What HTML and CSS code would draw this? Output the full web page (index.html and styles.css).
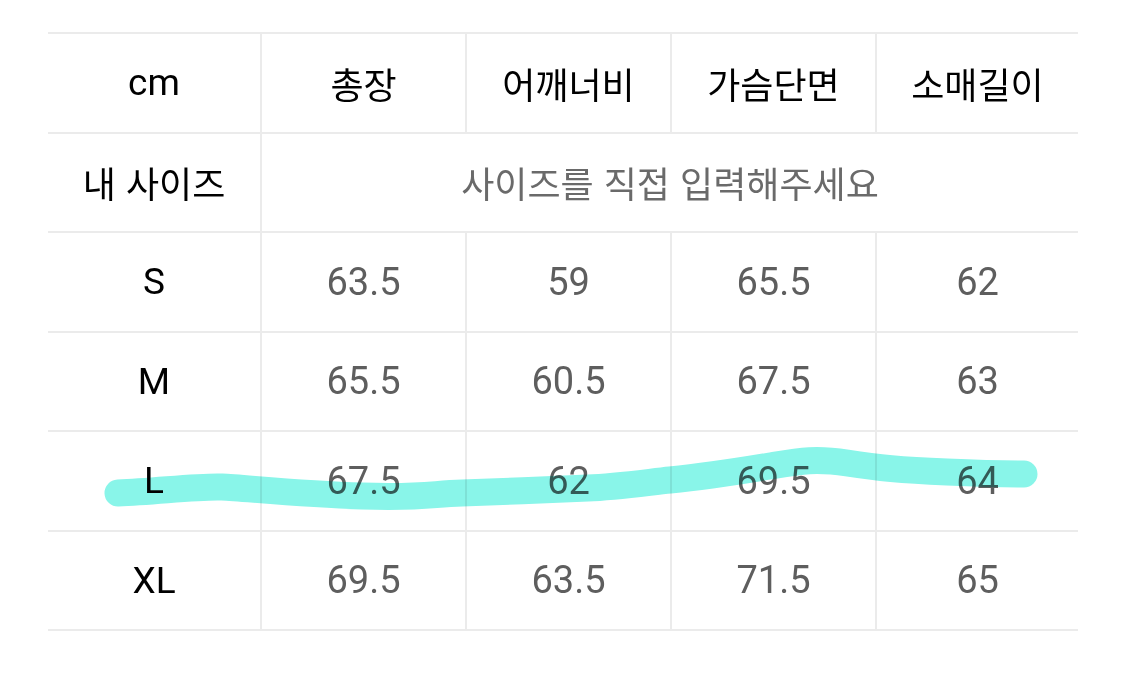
FILE: index.html
```html
<!DOCTYPE html>
<html lang="ko">
<head>
<meta charset="utf-8">
<title>사이즈표</title>
<link rel="stylesheet" href="styles.css">
</head>
<body>
<div class="wrap">
  <div class="size-table">
    <div class="cell head lat">cm</div>
    <div class="cell head ko line">총장</div>
    <div class="cell head ko line">어깨너비</div>
    <div class="cell head ko line">가슴단면</div>
    <div class="cell head ko line">소매길이</div>

    <div class="cell head ko">내 사이즈</div>
    <div class="cell hint ko line span4">사이즈를 직접 입력해주세요</div>

    <div class="cell head lat">S</div>
    <div class="cell val line">63.5</div>
    <div class="cell val line">59</div>
    <div class="cell val line">65.5</div>
    <div class="cell val line">62</div>

    <div class="cell head lat">M</div>
    <div class="cell val line">65.5</div>
    <div class="cell val line">60.5</div>
    <div class="cell val line">67.5</div>
    <div class="cell val line">63</div>

    <div class="cell head lat">L</div>
    <div class="cell val line">67.5</div>
    <div class="cell val line">62</div>
    <div class="cell val line">69.5</div>
    <div class="cell val line">64</div>

    <div class="cell head lat">XL</div>
    <div class="cell val line">69.5</div>
    <div class="cell val line">63.5</div>
    <div class="cell val line">71.5</div>
    <div class="cell val line">65</div>
  </div>
  <svg class="marker" width="1125" height="675" viewBox="0 0 1125 675" aria-hidden="true">
    <path d="M118 493 C 160 491, 200 486, 222 487 S 300 494, 362 496 S 430 494, 462 493 S 560 489, 588 488 S 650 482, 670 480 S 740 471, 770 466 S 815 458, 847 463 S 900 470, 947 472 S 1000 474, 1024 474" />
  </svg>
</div>
</body>
</html>
```
FILE: styles.css
```css
html, body {
  margin: 0;
  padding: 0;
  background: #ffffff;
}

.wrap {
  position: relative;
  width: 1125px;
  height: 675px;
  overflow: hidden;
}

.size-table {
  margin: 32px 0 0 48px;
  width: 1030px;
  display: grid;
  grid-template-columns: 212px 205px 205px 205px 203px;
  grid-auto-rows: 99.5px;
  border-top: 2px solid #ebebeb;
}

.cell {
  display: flex;
  align-items: center;
  justify-content: center;
  border-bottom: 2px solid #ebebeb;
  box-sizing: border-box;
  white-space: nowrap;
}

.line {
  border-left: 2px solid #ebebeb;
}

.span4 {
  grid-column: span 4;
}

.head {
  color: #000000;
}

.lat {
  font-family: Roboto, "Liberation Sans", sans-serif;
  font-size: 37px;
}

.ko {
  font-family: "Noto Sans CJK KR", "Noto Sans", sans-serif;
  font-size: 36px;
  font-weight: 400;
}

.hint {
  color: #6a6a6a;
}

.val {
  font-family: Roboto, "Liberation Sans", sans-serif;
  font-size: 38px;
  color: #5e5e5e;
}

.marker {
  position: absolute;
  left: 0;
  top: 0;
  pointer-events: none;
  mix-blend-mode: multiply;
}

.marker path {
  fill: none;
  stroke: #89f5e9;
  stroke-width: 27;
  stroke-linecap: round;
  stroke-linejoin: round;
}
```
